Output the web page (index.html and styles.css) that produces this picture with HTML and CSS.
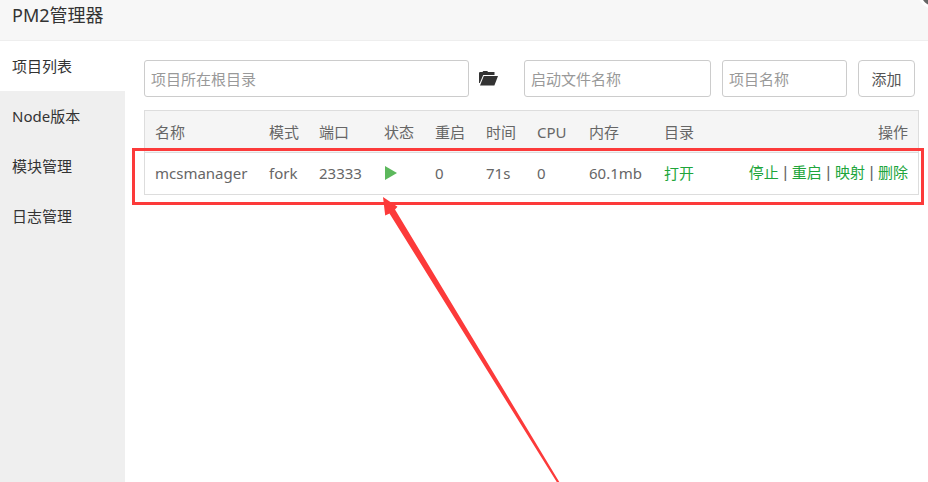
FILE: index.html
```html
<!DOCTYPE html>
<html lang="zh-CN">
<head>
<meta charset="utf-8">
<title>PM2管理器</title>
<link rel="stylesheet" href="styles.css">
</head>
<body>
<div class="dialog">
  <header class="titlebar">
    <h1>PM2管理器</h1>
    <button class="close" type="button" aria-label="关闭"></button>
  </header>
  <div class="body">
    <nav class="menu">
      <a class="active" href="#list">项目列表</a>
      <a href="#node">Node版本</a>
      <a href="#modules">模块管理</a>
      <a href="#logs">日志管理</a>
    </nav>
    <main class="content">
      <form class="add-form">
        <input class="path" type="text" aria-label="项目所在根目录" placeholder="项目所在根目录">
        <button class="browse" type="button" aria-label="选择目录">
          <svg viewBox="0 0 19 15" width="19" height="15"><path d="M0 12V1.800L.8 1h2.700L4.300 0h4L9 1h6.500v3H4.200L.8 12z"/><path d="M4.800 5H19l-3.600 9.500H1z"/></svg>
        </button>
        <input class="file" type="text" aria-label="启动文件名称" placeholder="启动文件名称">
        <input class="name" type="text" aria-label="项目名称" placeholder="项目名称">
        <button class="add" type="button">添加</button>
      </form>
      <div class="list">
        <table>
          <colgroup>
            <col class="c-name"><col class="c-mode"><col class="c-port"><col class="c-short"><col class="c-short"><col class="c-short"><col class="c-cpu"><col class="c-mem"><col class="c-dir"><col>
          </colgroup>
          <thead>
            <tr><th>名称</th><th>模式</th><th>端口</th><th>状态</th><th>重启</th><th>时间</th><th>CPU</th><th>内存</th><th>目录</th><th class="ops">操作</th></tr>
          </thead>
          <tbody>
            <tr>
              <td>mcsmanager</td><td>fork</td><td>23333</td>
              <td><svg class="running" role="img" aria-label="运行中" viewBox="0 0 12 14" width="12" height="14"><path d="M0 0l12 7-12 7z"/></svg></td>
              <td>0</td><td>71s</td><td>0</td><td>60.1mb</td>
              <td><a href="#open">打开</a></td>
              <td class="ops"><a href="#stop">停止</a><span class="sep"> | </span><a href="#restart">重启</a><span class="sep"> | </span><a href="#map">映射</a><span class="sep"> | </span><a href="#delete">删除</a></td>
            </tr>
          </tbody>
        </table>
        <div class="highlight"></div>
        <svg class="arrow" viewBox="0 0 180 290" width="180" height="290" aria-hidden="true"><path d="M0 0L14.500 9.800 12 12.500 177.500 287 175 287 6.500 16.500 2.200 18.500z"/></svg>
      </div>
    </main>
  </div>
</div>
</body>
</html>
```
FILE: styles.css
```css
* { box-sizing: border-box; }

body {
  margin: 0;
  overflow: hidden;
  background: #fff;
  color: #666;
  font: 15px/20px "Noto Sans", "Noto Sans CJK SC", sans-serif;
}

input, button { font: inherit; }

a { color: #20a53a; text-decoration: none; }

.dialog {
  position: relative;
  display: flex;
  flex-direction: column;
  min-height: 100vh;
}

.titlebar {
  height: 41px;
  padding: 3px 12px;
  background: #f7f7f7;
  border-bottom: 1px solid #eee;
}

.titlebar h1 {
  margin: 0;
  color: #333;
  font-size: 18px;
  font-weight: 400;
  line-height: 24px;
}

.close {
  position: absolute;
  top: -23px;
  right: -22px;
  width: 32px;
  height: 32px;
  padding: 0;
  border: 3px solid #fff;
  border-radius: 50%;
  background: #666;
}

.body { display: flex; flex: 1; }

.menu {
  flex: none;
  width: 125px;
  background: #efefef;
}

.menu a {
  display: block;
  padding: 0 12px;
  color: #333;
  line-height: 50px;
}

.menu .active { background: #fff; }

.content {
  flex: 1;
  min-width: 0;
  padding: 19px 9px 0 19px;
}

.add-form {
  display: flex;
  align-items: center;
  margin-bottom: 13px;
  padding-right: 4px;
}

.add-form input {
  min-width: 0;
  height: 37px;
  padding: 0 6px;
  border: 1px solid #ccc;
  border-radius: 3px;
  background: #fff;
  color: #555;
}

.add-form input::placeholder { color: #999; opacity: 1; }

.add-form .path { flex: 325 1 325px; }
.add-form .file { flex: 187 1 187px; margin-right: 11px; }
.add-form .name { flex: 125 1 125px; margin-right: 11px; }

.browse {
  display: flex;
  flex: none;
  width: 55px;
  padding: 0 10px;
  border: 0;
  background: none;
}

.browse svg { fill: #333; }

.add {
  flex: none;
  width: 57px;
  height: 37px;
  padding: 0;
  border: 1px solid #ccc;
  border-radius: 4px;
  background: #fff;
  color: #555;
}

.list { position: relative; }

table {
  width: 100%;
  table-layout: fixed;
  border: 1px solid #ddd;
  border-collapse: separate;
  border-spacing: 0;
}

.c-name { width: 114px; }
.c-mode { width: 50px; }
.c-port { width: 65px; }
.c-short { width: 51px; }
.c-cpu { width: 52px; }
.c-mem { width: 75px; }
.c-dir { width: 60px; }

th, td {
  padding: 0 10px;
  font-weight: 400;
  text-align: left;
  white-space: nowrap;
}

th { height: 41px; background: #f5f5f5; }

td {
  height: 42px;
  padding-bottom: 2px;
  border-top: 1px solid #ddd;
}

.ops { text-align: right; }

.sep { font: 16px/20px "Liberation Sans", sans-serif; }

.running {
  display: block;
  margin-left: 1px;
  fill: #5cb85c;
}

.highlight {
  position: absolute;
  top: 38px;
  right: -5px;
  bottom: -10px;
  left: -12px;
  border: 3px solid #fc3a3a;
  pointer-events: none;
}

.arrow {
  position: absolute;
  top: 87px;
  left: 239px;
  fill: #fc3a3a;
  pointer-events: none;
}
```
